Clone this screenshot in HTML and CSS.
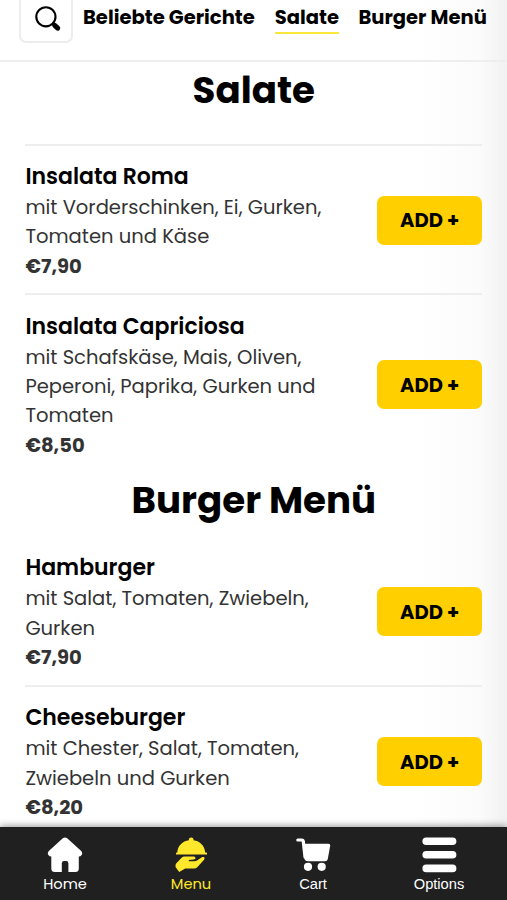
FILE: index.html
```html
<!DOCTYPE html>
<html lang="de">
<head>
<meta charset="utf-8">
<meta name="viewport" content="width=device-width, initial-scale=1">
<title>Speisekarte</title>
<link rel="stylesheet" href="styles.css">
</head>
<body>
<div class="app">
  <header class="top">
    <button class="search" aria-label="Suche">
      <svg width="28" height="28" viewBox="0 0 28 28"><circle cx="10.9" cy="10.8" r="9.6" fill="none" stroke="#000" stroke-width="2.1"/><path d="M17.5 17.3l2.4 2.2" stroke="#000" stroke-width="2.6"/><path d="M19.7 19.4l3 2.8" stroke="#000" stroke-width="5" stroke-linecap="round"/></svg>
    </button>
    <nav class="tabs">
      <a class="tab tab-popular">Beliebte Gerichte</a>
      <a class="tab tab-salads active">Salate</a>
      <a class="tab tab-burgers">Burger Menü</a>
    </nav>
  </header>
  <main class="menu">
    <h2 class="title">Salate</h2>
    <section class="items">
      <article class="item ruled">
        <div class="info">
          <h3 class="name">Insalata Roma</h3>
          <p class="desc">mit Vorderschinken, Ei, Gurken,<br>Tomaten und Käse</p>
          <p class="price">€7,90</p>
        </div>
        <button class="add">ADD +</button>
      </article>
      <article class="item ruled">
        <div class="info">
          <h3 class="name">Insalata Capriciosa</h3>
          <p class="desc">mit Schafskäse, Mais, Oliven,<br>Peperoni, Paprika, Gurken und<br>Tomaten</p>
          <p class="price">€8,50</p>
        </div>
        <button class="add">ADD +</button>
      </article>
    </section>
    <h2 class="title title-burgers">Burger Menü</h2>
    <section class="items">
      <article class="item">
        <div class="info">
          <h3 class="name">Hamburger</h3>
          <p class="desc">mit Salat, Tomaten, Zwiebeln,<br>Gurken</p>
          <p class="price">€7,90</p>
        </div>
        <button class="add">ADD +</button>
      </article>
      <article class="item ruled">
        <div class="info">
          <h3 class="name">Cheeseburger</h3>
          <p class="desc">mit Chester, Salat, Tomaten,<br>Zwiebeln und Gurken</p>
          <p class="price">€8,20</p>
        </div>
        <button class="add">ADD +</button>
      </article>
    </section>
  </main>
  <nav class="bottom">
    <a class="link link-home"><svg width="36" height="36" viewBox="0 0 36 36"><path fill="#fff" d="M15.8 1.3Q18 -.3 20.2 1.3L34.2 14Q36 16 34.6 18Q33.6 19.5 31.8 19.5V31.5Q31.8 35 28.3 35H21.4V26.3Q21.4 24 19.2 24H17Q14.8 24 14.8 26.3V35H7.8Q4.3 35 4.3 31.5V19.5Q2.4 19.5 1.4 18Q0 16 1.8 14Z"/></svg><span>Home</span></a>
    <a class="link link-menu"><svg width="36" height="36" viewBox="0 0 36 36"><path fill="#ffe82c" d="M4.3 15.5C4.8 8.7 9.5 4.2 15.9 3.3V2.3Q15.9 .5 18.2 .5Q20.5 .5 20.5 2.3V3.3C27 4.2 31.6 8.7 32.2 15.5H33.3Q34 15.5 34 16.3V17.5H3V16.3Q3 15.5 3.8 15.5ZM2.7 27L8.6 20.8Q9.8 19.5 11.5 19.5H20.8Q22.5 19.5 22.5 21Q22.5 22.3 20.8 22.5L15.8 23V24.3H21.3Q23 24.3 24 23.5L29.3 20Q31.3 19.5 31.6 21Q31.6 22.2 30.8 23L24.5 30Q23 31.5 21 31.5H12.2L6.2 35L2.5 30Z"/></svg><span>Menu</span></a>
    <a class="link link-cart"><svg width="36" height="36" viewBox="0 0 36 36"><path d="M2.8 3H6.7Q8.2 3 8.3 4.5L10 20" fill="none" stroke="#fff" stroke-width="3.2" stroke-linecap="round"/><path fill="#fff" d="M8.2 6.7H33.5Q35.3 6.7 35.2 8.5L32.8 22Q32.3 24.3 29.8 24.3H13Q9.8 24.3 9.3 21Z"/><circle cx="13" cy="29.8" r="4.1" fill="#fff"/><circle cx="26.7" cy="29.8" r="4.1" fill="#fff"/></svg><span>Cart</span></a>
    <a class="link link-options"><svg width="36" height="36" viewBox="0 0 36 36"><path d="M5.2 4.2H31.6M5.2 17.8H31.6M5.2 31.4H31.6" stroke="#fff" stroke-width="7.6" stroke-linecap="round"/></svg><span>Options</span></a>
  </nav>
</div>
</body>
</html>
```
FILE: styles.css
```css
* { box-sizing: border-box; }

body, h2, h3, p { margin: 0; }

body {
  height: 900px;
  overflow: hidden;
  font-family: Poppins, Inter, sans-serif;
  color: #000;
}

.app {
  height: 900px;
  display: flex;
  flex-direction: column;
  overflow: hidden;
  background: linear-gradient(to right, #fff 415px, #fbfbfb 480px, #f1f1f1 507px);
}

button {
  font: inherit;
  border: 0;
  padding: 0;
  color: #000;
}

.top {
  flex: none;
  height: 62px;
  display: flex;
  align-items: flex-start;
  padding-left: 19px;
  border-bottom: 2px solid #eee;
}

.search {
  width: 54px;
  height: 54px;
  margin-top: -11px;
  padding: 17px 0 0 14px;
  display: flex;
  background: #fff;
  border: 2px solid #ededed;
  border-top: 0;
  border-radius: 7px;
}

.tabs {
  display: flex;
  gap: 19.7px;
  margin-left: 10px;
  padding-top: 2px;
}

.tab {
  height: 32px;
  font-size: 19.55px;
  line-height: 31px;
  font-weight: 700;
  white-space: nowrap;
}

.tab-popular { width: 172px; }
.tab-salads { width: 64px; }
.tab-burgers { width: 128px; }
.active { border-bottom: 2px solid #fce83a; }

.menu {
  flex: 1;
  min-height: 0;
  overflow: hidden;
  padding: 1px 24.8px 0 25.4px;
}

.title {
  height: 80.6px;
  font-size: 37.2px;
  line-height: 54px;
  font-weight: 700;
  text-align: center;
}

.title-burgers { height: 62.7px; }

.item {
  display: flex;
  align-items: center;
  justify-content: space-between;
  padding: 15px 0 12.6px;
  border-top: 1px solid transparent;
}

.ruled {
  border-top: 2px solid #eee;
  padding-top: 14.3px;
}

.name {
  font-size: 22px;
  line-height: 33px;
  font-weight: 600;
  white-space: nowrap;
}

.desc, .price {
  font-size: 19.55px;
  line-height: 29.33px;
  color: #333;
  white-space: nowrap;
}

.price { font-weight: 700; }

.add {
  flex: none;
  width: 105px;
  height: 49px;
  border-radius: 7px;
  background: #ffcf00;
  font-size: 19.55px;
  font-weight: 700;
}

.bottom {
  flex: none;
  height: 73px;
  display: grid;
  grid-template-columns: 130px 122px 122px 130px;
  padding-top: 10px;
  background: #202020;
  box-shadow: 0 -1px 7px rgba(0, 0, 0, .42);
  position: relative;
}

.link {
  display: flex;
  flex-direction: column;
  align-items: center;
  color: #fff;
  font-size: 14.67px;
  line-height: 22.6px;
}

.link-menu { color: #ffe82c; }

.link-cart, .link-options {
  font-family: "Liberation Sans", Arial, sans-serif;
}
```
